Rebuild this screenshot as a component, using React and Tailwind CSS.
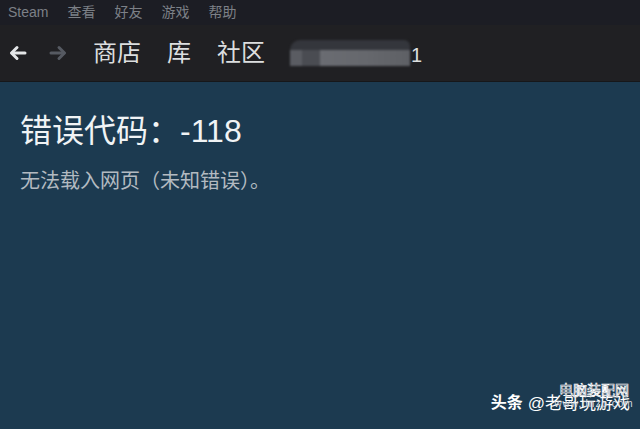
const Arrow = ({ dir, className }) => (
  <svg width="18" height="16" viewBox="0 0 18 16" className={className}>
    <g
      fill="none"
      stroke="currentColor"
      strokeWidth="3"
      strokeLinecap="round"
      strokeLinejoin="round"
      transform={dir === 'right' ? 'translate(18 0) scale(-1 1)' : undefined}
    >
      <path d="M16 8H3" />
      <path d="M8 2.5L2.5 8L8 13.5" />
    </g>
  </svg>
);

const App = () => {
  const menu = ['Steam', '查看', '好友', '游戏', '帮助'];

  return (
    <div
      className="w-[640px] h-[429px] flex flex-col overflow-hidden bg-[#1c3a50]"
      style={{ fontFamily: '"Liberation Sans", "Noto Sans CJK SC", sans-serif' }}
    >
      <div className="h-[25px] bg-[#1c1d24] flex items-center gap-[19px] pl-[8px] text-[14px] text-[#7c8087]">
        {menu.map((m) => (
          <span key={m}>{m}</span>
        ))}
      </div>

      <div className="h-[57px] bg-[#202023] border-b border-[#16171a] flex items-center">
        <Arrow className="ml-[9px] text-[#e4e6e8]" />
        <Arrow dir="right" className="ml-[22px] text-[#565a62]" />
        <div className="ml-[26px] flex items-center gap-[26px] text-[24px] text-[#dcdedf]">
          <span>商店</span>
          <span>库</span>
          <span>社区</span>
        </div>
        <div className="ml-[25px] flex items-end h-[26px]">
          <div className="w-[120px] h-[26px] flex flex-col blur-[0.8px]">
            <div className="h-[10px] rounded-tl-[10px] rounded-tr-[6px] bg-[#34363c]" />
            <div className="flex-1 flex">
              <div className="w-[12px] bg-[#5a5c62]" />
              <div className="w-[18px] bg-[#4a4c52]" />
              <div className="flex-1 bg-gradient-to-r from-[#6a6c72] via-[#66686d] to-[#5e6065]" />
            </div>
          </div>
          <span className="text-[20px] leading-[22px] text-[#dcdedf] ml-[1px]">1</span>
        </div>
      </div>

      <div className="flex-1 px-[20px] pt-[29px] relative">
        <h1 className="text-[32px] leading-[40px] text-[#f0f3f5]">错误代码：-118</h1>
        <p className="mt-[18px] text-[20px] leading-[24px] text-[#b3bac1]">无法载入网页（未知错误）。</p>

        <div className="absolute right-[10px] bottom-[13px] flex items-center text-white">
          <span className="text-[16px] font-bold">头条</span>
          <span className="ml-[5px] text-[17px]">@老哥玩游戏</span>
          <div className="absolute right-[0px] -top-[8px] w-[72px] flex flex-col items-center leading-none">
            <span
              className="text-[14px] text-[#1b2a40]"
              style={{ WebkitTextStroke: '0.7px #ffffff' }}
            >
              电脑装配网
            </span>
            <span className="text-[10px] tracking-[1px] text-[#d8dce0] mt-[2px]">www.dnzp.com</span>
          </div>
        </div>
      </div>
    </div>
  );
};

export default App;
